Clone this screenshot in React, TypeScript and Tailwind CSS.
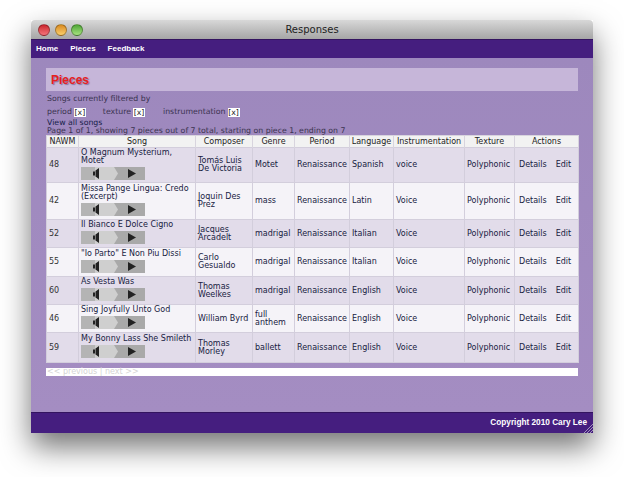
const pieces = [
  { nawm: "48", song: "O Magnum Mysterium, Motet", composer: "Tomás Luis De Victoria", genre: "Motet", language: "Spanish", instrumentation: "voice", height: "h-[35px]" },
  { nawm: "42", song: "Missa Pange Lingua: Credo (Excerpt)", composer: "Joquin Des Prez", genre: "mass", language: "Latin", instrumentation: "Voice", height: "h-[37px]" },
  { nawm: "52", song: "Il Bianco E Dolce Cigno", composer: "Jacques Arcadelt", genre: "madrigal", language: "Italian", instrumentation: "Voice", height: "h-[28px]" },
  { nawm: "55", song: "\"Io Parto\" E Non Piu Dissi", composer: "Carlo Gesualdo", genre: "madrigal", language: "Italian", instrumentation: "Voice", height: "h-[29px]" },
  { nawm: "60", song: "As Vesta Was", composer: "Thomas Weelkes", genre: "madrigal", language: "English", instrumentation: "Voice", height: "h-[28px]" },
  { nawm: "46", song: "Sing Joyfully Unto God", composer: "William Byrd", genre: "full anthem", language: "English", instrumentation: "Voice", height: "h-[28px]" },
  { nawm: "59", song: "My Bonny Lass She Smileth", composer: "Thomas Morley", genre: "ballett", language: "English", instrumentation: "Voice", height: "h-[30px]" },
];

const columns = [
  { label: "NAWM", width: "w-[32px]" },
  { label: "Song", width: "w-[117px]" },
  { label: "Composer", width: "w-[57px]" },
  { label: "Genre", width: "w-[42px]" },
  { label: "Period", width: "w-[55px]" },
  { label: "Language", width: "w-[44px]" },
  { label: "Instrumentation", width: "w-[71px]" },
  { label: "Texture", width: "w-[50px]" },
  { label: "Actions", width: "w-[64px]" },
];

function Player() {
  return (
    <svg width="64" height="13" viewBox="0 0 64 13" className="mt-[2px] block">
      <rect width="64" height="13" fill="#a9a9a9" />
      <rect width="18" height="13" fill="#b4b4b4" />
      <path d="M14 0H33L37 6.5L33 13H14Z" fill="#cfcfcf" />
      <path d="M12 4.5H14V8.5H12ZM14.5 3.5L18 1V12L14.5 9.5Z" fill="#222" />
      <path d="M47 2L55 6.5L47 11Z" fill="#222" />
    </svg>
  );
}

function Dot({ color }: { color: string }) {
  return <span className={`h-[12px] w-[12px] rounded-full border border-black/30 ${color}`} />;
}

function Remove() {
  return <span className="ml-[2px] h-[9px] w-[12px] bg-white text-center leading-[9px] text-[#222]">[x]</span>;
}

export default function App() {
  return (
    <div className="h-[477px] w-[624px] overflow-hidden bg-white pl-[31px] pt-[20px] font-['DejaVu_Sans',sans-serif] text-[8px] leading-[8px] text-[#3b3350]">
      <div className="relative w-[562px] shadow-[0_14px_28px_rgba(0,0,0,0.55)]">
        <div className="relative flex h-[19px] items-center gap-[4.5px] rounded-t-[4px] bg-gradient-to-b from-[#d8d8d8] to-[#a6a6a6] pl-[7px]">
          <Dot color="bg-gradient-to-b from-[#c9202c] to-[#f6727a]" />
          <Dot color="bg-gradient-to-b from-[#d98a1c] to-[#fbd06a]" />
          <Dot color="bg-gradient-to-b from-[#4ea636] to-[#a6e47e]" />
          <span className="absolute inset-x-0 text-center text-[10px] leading-[12px] text-[#222]">Responses</span>
        </div>

        <nav className="flex h-[19px] items-center gap-[12px] border-t border-[#33145f] bg-[#451e7f] pl-[5px] font-['Liberation_Sans',sans-serif] text-[8px] font-bold text-white">
          <span>Home</span>
          <span>Pieces</span>
          <span>Feedback</span>
        </nav>

        <main className="h-[354px] bg-gradient-to-b from-[#9d88bd] to-[#a48dc2] px-[15px] pt-[10px]">
          <h1 className="flex h-[23px] items-center bg-[#c6b6d9] pl-[5px] font-['Liberation_Sans',sans-serif] text-[12px] font-bold text-[#e8211f] [text-shadow:1px_1px_1px_rgba(90,70,120,0.6)]">Pieces</h1>
          <p className="mt-[2px] pl-[1px] text-[7.8px] leading-[12px]">Songs currently filtered by</p>
          <div className="mt-[1px] flex h-[12px] items-center pl-[1px] text-[7.8px] leading-[12px]">
            <span>period</span>
            <Remove />
            <span className="ml-[17px]">texture</span>
            <Remove />
            <span className="ml-[18px]">instrumentation</span>
            <Remove />
          </div>
          <p className="pl-[1px] pt-[1px] text-[7.8px] text-[#16204a]">View all songs</p>
          <p className="pl-[1px] text-[7.8px]">Page 1 of 1, showing 7 pieces out of 7 total, starting on piece 1, ending on 7</p>

          <table className="w-[532px] table-fixed border-collapse">
            <thead>
              <tr className="h-[12px] bg-[#f2f2f2] text-[#222]">
                {columns.map((column) => (
                  <th key={column.label} className={`${column.width} border-x border-t border-[#d8d4de] p-0 text-center font-normal whitespace-nowrap`}>
                    {column.label}
                  </th>
                ))}
              </tr>
            </thead>
            <tbody className="text-[#17213f]">
              {pieces.map((piece, index) => {
                const cell = "border border-[#d3cedc] px-[2px] py-0 align-middle whitespace-nowrap";
                return (
                  <tr key={piece.nawm} className={`${piece.height} ${index % 2 === 0 ? "bg-[#e2dcea]" : "bg-[#f5f3f8]"}`}>
                    <td className={`${cell} text-[#333]`}>{piece.nawm}</td>
                    <td className="border border-[#d3cedc] px-[2px] pb-[2px] pt-0 align-middle">
                      {piece.song}
                      <Player />
                    </td>
                    <td className="border border-[#d3cedc] px-[2px] py-0 align-middle">{piece.composer}</td>
                    <td className="border border-[#d3cedc] px-[2px] py-0 align-middle">{piece.genre}</td>
                    <td className={cell}>Renaissance</td>
                    <td className={cell}>{piece.language}</td>
                    <td className={cell}>{piece.instrumentation}</td>
                    <td className={cell}>Polyphonic</td>
                    <td className={cell}>
                      <div className="flex gap-[9px] pl-[2px]">
                        <span>Details</span>
                        <span>Edit</span>
                      </div>
                    </td>
                  </tr>
                );
              })}
            </tbody>
          </table>

          <div className="mt-[5px] h-[8px] w-[532px] bg-white pl-[1px] text-[#d4d4d4]">&lt;&lt; previous | next &gt;&gt;</div>
        </main>

        <footer className="relative flex h-[21px] items-center justify-end border-t border-[#33145f] bg-[#451e7f] pr-[6px] font-['Liberation_Sans',sans-serif] text-[8.25px] font-bold text-white">
          Copyright 2010 Cary Lee
          <svg width="9" height="9" viewBox="0 0 9 9" className="absolute bottom-0 right-0">
            <path d="M0 9L9 0M3 9L9 3M6 9L9 6" stroke="#b9b0c9" strokeWidth="0.8" />
          </svg>
        </footer>
      </div>
    </div>
  );
}
